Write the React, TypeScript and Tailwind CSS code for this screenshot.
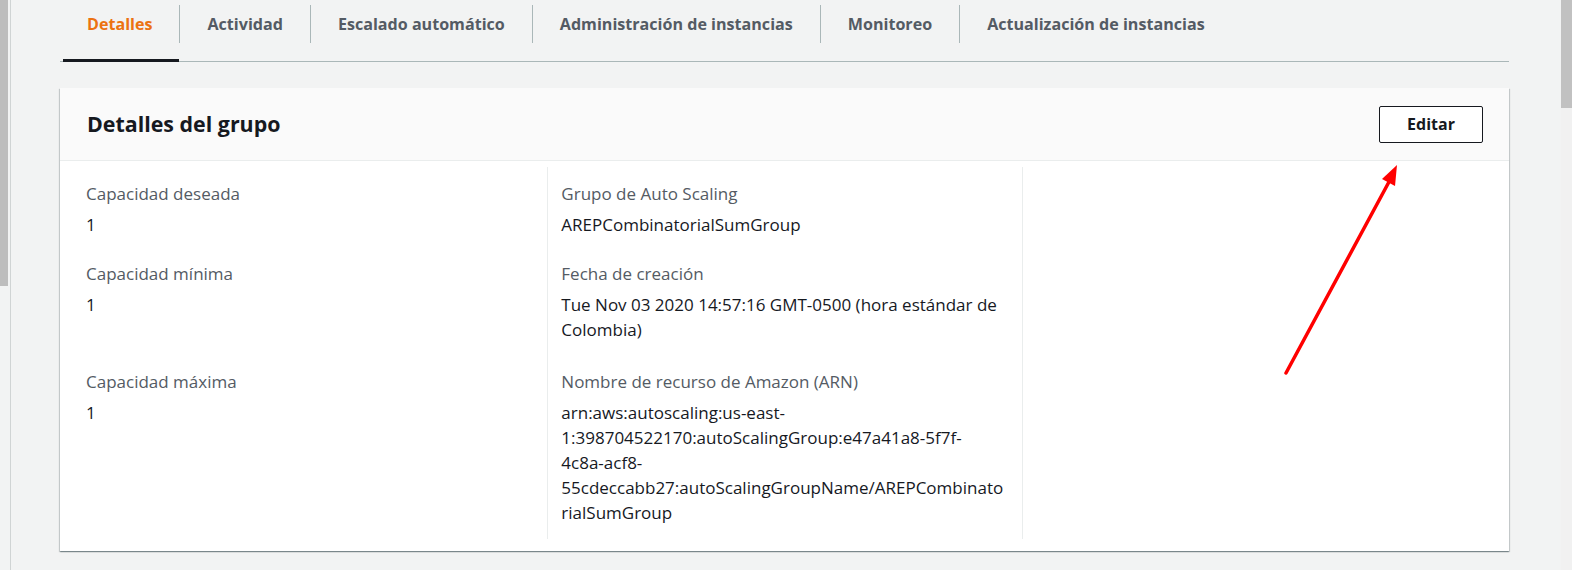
import React from "react";

const tabs = [
  "Detalles",
  "Actividad",
  "Escalado automático",
  "Administración de instancias",
  "Monitoreo",
  "Actualización de instancias",
];

function Field({ label, lines }: { label: string; lines: string[] }) {
  return (
    <div>
      <div className="text-[#545b64] leading-[25px]">{label}</div>
      <div className="mt-[6px] text-[#16191f] leading-[25px]">
        {lines.map((l, i) => (
          <div key={i} className="whitespace-nowrap">
            {l}
          </div>
        ))}
      </div>
    </div>
  );
}

export default function App() {
  const row1 = "pt-[14px] pb-[12px]";
  const row2 = "pt-[12px] pb-[14px]";
  const row3 = "pt-[13px] pb-[14px]";

  return (
    <div
      className="relative flex h-[570px] w-[1572px] overflow-hidden bg-[#f2f3f3] text-[17px]"
      style={{ fontFamily: '"Open Sans", "Noto Sans", sans-serif' }}
    >
      {/* left panel edge */}
      <div className="flex shrink-0">
        <div className="h-[286px] w-[8px] bg-[#bdbdbd]" />
        <div className="w-[2px]" />
        <div className="w-px bg-[#d0d4d4]" />
      </div>

      <div className="flex-1 pl-[49px] pr-[52px]">
        {/* tabs */}
        <div className="flex h-[62px] border-b border-[#aab7b8]">
          {tabs.map((t, i) => (
            <div key={t} className="relative pt-[5px]">
              <div
                className={`flex h-[38px] items-center px-[27px] text-[16.1px] font-bold ${
                  i < tabs.length - 1 ? "border-r border-[#aab7b8]" : ""
                } ${i === 0 ? "text-[#ec7211]" : "text-[#545b64]"}`}
              >
                {t}
              </div>
              {i === 0 && (
                <div className="absolute bottom-[-1px] left-[3px] right-[1px] h-[3px] bg-[#16191f]" />
              )}
            </div>
          ))}
        </div>

        {/* card */}
        <div className="mt-[26px] bg-white shadow-[0_1px_1px_0_rgba(0,28,36,0.3),1px_1px_1px_0_rgba(0,28,36,0.15),-1px_1px_1px_0_rgba(0,28,36,0.15)]">
          <div className="flex h-[73px] items-center justify-between border-b border-[#eaeded] bg-[#fafafa] pl-[27px] pr-[26px]">
            <h2 className="text-[21.4px] font-bold text-[#16191f]">Detalles del grupo</h2>
            <button className="h-[37px] w-[104px] rounded-[2px] border border-[#16191f] bg-white text-[16px] font-bold text-[#16191f]">
              Editar
            </button>
          </div>

          <div className="px-[13px] pt-[6px] pb-[12px]">
            <div className="grid grid-cols-3">
              <div className={`pl-[13px] ${row1}`}>
                <Field label="Capacidad deseada" lines={["1"]} />
              </div>
              <div className={`border-l border-[#eaeded] pl-[13px] ${row1}`}>
                <Field label="Grupo de Auto Scaling" lines={["AREPCombinatorialSumGroup"]} />
              </div>
              <div className={`border-l border-[#eaeded] ${row1}`} />

              <div className={`pl-[13px] ${row2}`}>
                <Field label="Capacidad mínima" lines={["1"]} />
              </div>
              <div className={`border-l border-[#eaeded] pl-[13px] ${row2}`}>
                <Field
                  label="Fecha de creación"
                  lines={["Tue Nov 03 2020 14:57:16 GMT-0500 (hora estándar de", "Colombia)"]}
                />
              </div>
              <div className={`border-l border-[#eaeded] ${row2}`} />

              <div className={`pl-[13px] ${row3}`}>
                <Field label="Capacidad máxima" lines={["1"]} />
              </div>
              <div className={`border-l border-[#eaeded] pl-[13px] ${row3}`}>
                <Field
                  label="Nombre de recurso de Amazon (ARN)"
                  lines={[
                    "arn:aws:autoscaling:us-east-",
                    "1:398704522170:autoScalingGroup:e47a41a8-5f7f-",
                    "4c8a-acf8-",
                    "55cdeccabb27:autoScalingGroupName/AREPCombinato",
                    "rialSumGroup",
                  ]}
                />
              </div>
              <div className={`border-l border-[#eaeded] ${row3}`} />
            </div>
          </div>
        </div>
      </div>

      {/* scrollbar */}
      <div className="w-[11px] shrink-0 bg-[#f1f1f1]">
        <div className="h-[108px] w-full bg-[#c1c1c1]" />
      </div>

      {/* annotation arrow */}
      <svg className="pointer-events-none absolute left-0 top-0" width="1572" height="570">
        <line x1="1286" y1="373" x2="1390" y2="180" stroke="#ff0000" strokeWidth="3.5" strokeLinecap="round" />
        <polygon points="1397,165 1382,179 1395,186" fill="#ff0000" />
      </svg>
    </div>
  );
}
